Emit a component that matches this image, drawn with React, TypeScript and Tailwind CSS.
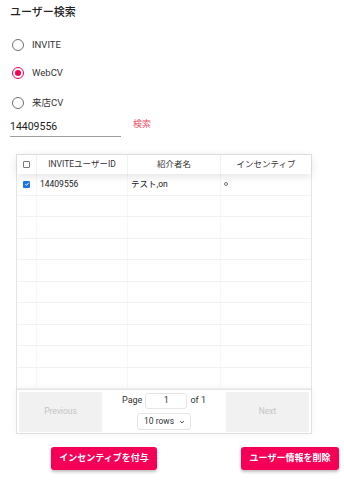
import React from "react";

const rows = Array.from({ length: 10 });

function Radio({ label, checked }: { label: string; checked?: boolean }) {
  return (
    <div className="flex h-[28px] items-center">
      <div
        className={`ml-[2px] flex h-[12px] w-[12px] items-center justify-center rounded-full border-[1.5px] ${
          checked ? "border-[#f50057]" : "border-[#6f6f6f]"
        }`}
      >
        {checked && <div className="h-[6px] w-[6px] rounded-full bg-[#f50057]" />}
      </div>
      <span className="ml-[8px] text-[9.5px] text-[#333]">{label}</span>
    </div>
  );
}

export default function App() {
  return (
    <div className="h-[480px] w-[344px] bg-white px-[10px] font-['Roboto','Noto_Sans_CJK_JP',sans-serif] text-[#222]">
      <div className="flex h-[26px] items-center text-[11px] font-medium">ユーザー検索</div>

      <div className="mt-[5px]">
        <Radio label="INVITE" />
        <Radio label="WebCV" checked />
        <div className="mt-[2px]">
          <Radio label="来店CV" />
        </div>
      </div>

      <div className="flex items-end">
        <div className="flex h-[20px] w-[111px] items-center border-b border-[#9e9e9e] text-[10.5px] text-[#222]">
          14409556
        </div>
        <span className="mb-[6px] ml-[12px] text-[9px] text-[#ee4f66]">検索</span>
      </div>

      {/* table */}
      <div className="ml-[6px] mt-[17px] w-[296px] border border-black/10 text-[8.5px]">
        <div className="relative z-10 flex h-[19px] items-center shadow-[0_2px_10px_0_rgba(0,0,0,0.12)]">
          <div className="flex h-full w-[20px] items-center justify-center border-r border-black/5">
            <div className="h-[7px] w-[7px] rounded-[1px] border border-[#777]" />
          </div>
          <div className="flex h-full w-[91px] items-center justify-center border-r border-black/5 text-[#333]">
            INVITEユーザーID
          </div>
          <div className="flex h-full w-[93px] items-center justify-center border-r border-black/5 text-[#333]">
            紹介者名
          </div>
          <div className="flex h-full flex-1 items-center justify-center text-[#333]">インセンティブ</div>
        </div>
        {rows.map((_, i) => (
          <div key={i} className="flex h-[21.5px] items-center border-b border-black/[0.05]">
            <div className="flex h-full w-[20px] items-center justify-center border-r border-black/[0.03]">
              {i === 0 && (
                <div className="flex h-[7px] w-[7px] items-center justify-center rounded-[1px] bg-[#1a73e8]">
                  <svg viewBox="0 0 10 10" className="h-[6px] w-[6px]">
                    <path d="M2 5.2 L4.2 7.2 L8 2.8" fill="none" stroke="white" strokeWidth="1.6" />
                  </svg>
                </div>
              )}
            </div>
            <div className="flex h-full w-[91px] items-center border-r border-black/[0.03] pl-[3px] text-[#222]">
              {i === 0 ? "14409556" : ""}
            </div>
            <div className="flex h-full w-[93px] items-center border-r border-black/[0.03] pl-[3px] text-[#222]">
              {i === 0 ? "テスト,on" : ""}
            </div>
            <div className="flex h-full flex-1 items-center pl-[3px]">
              {i === 0 && <div className="h-[4px] w-[4px] rounded-full border border-[#777]" />}
            </div>
          </div>
        ))}
        <div className="flex h-[44px] items-center border-t border-black/10 p-[2px] shadow-[0_0_8px_0_rgba(0,0,0,0.06)]">
          <div className="flex h-[40px] w-[83px] items-center justify-center bg-[#f1f1f1] text-[8.5px] text-[#c4c4c4]">
            Previous
          </div>
          <div className="flex flex-1 flex-col items-center gap-[4px] text-[9px] text-[#333]">
            <div className="flex items-center gap-[3px]">
              <span>Page</span>
              <div className="flex h-[16px] w-[42px] items-center justify-center rounded-[3px] border border-black/10">
                1
              </div>
              <span>of 1</span>
            </div>
            <div className="flex h-[17px] w-[54px] items-center justify-between rounded-[3px] border border-black/10 pl-[6px] pr-[5px] text-[8.5px]">
              <span>10 rows</span>
              <svg viewBox="0 0 10 10" className="h-[6px] w-[6px]">
                <path d="M2 3.5 L5 6.5 L8 3.5" fill="none" stroke="#333" strokeWidth="1.6" />
              </svg>
            </div>
          </div>
          <div className="flex h-[40px] w-[83px] items-center justify-center bg-[#f1f1f1] text-[8.5px] text-[#c4c4c4]">
            Next
          </div>
        </div>
      </div>

      <div className="mt-[13px] flex items-center">
        <div className="ml-[41px] flex h-[23px] w-[106px] shrink-0 items-center justify-center rounded-[3px] bg-[#f50057] text-[9px] font-bold text-white shadow-[0_2px_3px_rgba(0,0,0,0.25)]">
          インセンティブを付与
        </div>
        <div className="ml-[84px] flex h-[23px] w-[98px] shrink-0 items-center justify-center rounded-[3px] bg-[#f50057] text-[9px] font-bold text-white shadow-[0_2px_3px_rgba(0,0,0,0.25)]">
          ユーザー情報を削除
        </div>
      </div>
    </div>
  );
}
